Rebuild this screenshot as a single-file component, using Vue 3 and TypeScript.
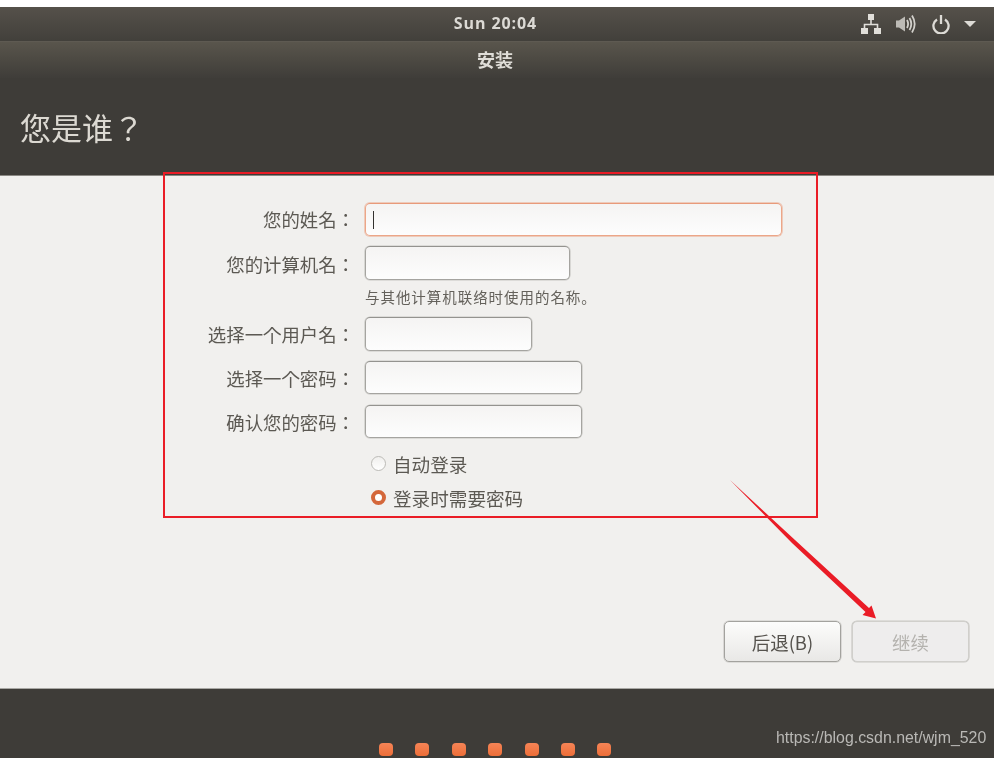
<script setup lang="ts">
const dots: number[] = [1, 2, 3, 4, 5, 6, 7];
</script>

<template>
  <div class="screen">
    <div class="topbar">
      <span class="clock">Sun 20:04</span>
      <div class="tray">
        <svg class="i-net" width="20" height="20" viewBox="0 0 20 20">
          <path d="M7 0h6v6H7zM0 14h7v6H0zM13 14h7v6h-7z" fill="#e0ded9" />
          <path d="M10 6v4M3.5 14v-3.5h13V14" fill="none" stroke="#e0ded9" stroke-width="1.6" />
        </svg>
        <svg class="i-vol" width="20" height="20" viewBox="0 0 20 20">
          <path d="M0 6.5h3L9 2.5v15l-6-4H0z" fill="#bdbbb6" />
          <path d="M11 6q2.2 4 0 8M13.5 4q3.6 6 0 12M16 1.5q5.4 8.5 0 17" fill="none" stroke="#d2d0cb" stroke-width="1.8" />
        </svg>
        <svg class="i-pow" width="18" height="19" viewBox="0 0 18 19">
          <path d="M5 4.4a7.6 7.6 0 1 0 8 0" fill="none" stroke="#dddbd6" stroke-width="2.3" />
          <path d="M9 0v9" fill="none" stroke="#dddbd6" stroke-width="2.3" />
        </svg>
        <svg class="i-caret" width="12" height="6" viewBox="0 0 12 6">
          <path d="M0 0h12L6 6z" fill="#dddbd6" />
        </svg>
      </div>
    </div>

    <div class="titlebar">安装</div>

    <header class="heading">
      <h1>您是谁？</h1>
    </header>

    <main class="content">
      <form class="form" @submit.prevent>
        <label class="label label-first">您的姓名：</label>
        <div class="field field-full focused"><span class="caret"></span></div>

        <label class="label label-host">您的计算机名：</label>
        <div class="field field-host"></div>

        <span></span>
        <p class="hint">与其他计算机联络时使用的名称。</p>

        <label class="label">选择一个用户名：</label>
        <div class="field field-user"></div>

        <label class="label">选择一个密码：</label>
        <div class="field field-pass"></div>

        <label class="label">确认您的密码：</label>
        <div class="field field-pass"></div>

        <span></span>
        <div class="radio-row">
          <span class="radio"></span>
          <span class="radio-text">自动登录</span>
        </div>

        <span></span>
        <div class="radio-row">
          <span class="radio checked"></span>
          <span class="radio-text">登录时需要密码</span>
        </div>
      </form>

      <div class="actions">
        <button type="button" class="btn">后退(B)</button>
        <button type="button" class="btn disabled">继续</button>
      </div>
    </main>

    <footer class="footer">
      <span v-for="d in dots" :key="d" class="dot"></span>
    </footer>

    <div class="red-box"></div>
    <svg class="arrow" width="996" height="758" viewBox="0 0 996 758">
      <path d="M730 480 L795 540 L869 608 L871.5 605.5 L876 618.5 L862.5 615 L865.5 612 L792 543 Z" fill="#ea1c26" />
    </svg>
    <span class="watermark">https://blog.csdn.net/wjm_520</span>
  </div>
</template>

<style>
html,
body {
  margin: 0;
  background: #fff;
}
</style>

<style scoped>
.screen {
  position: relative;
  width: 996px;
  height: 758px;
  box-sizing: border-box;
  padding: 7px 2px 0 0;
  display: flex;
  flex-direction: column;
  overflow: hidden;
  background: #fff;
  font-family: "Noto Sans CJK JP", "Noto Sans", sans-serif;
  filter: blur(0.35px);
}
.topbar {
  position: relative;
  height: 34px;
  flex: none;
  box-sizing: border-box;
  padding: 0 0 3px 0;
  display: flex;
  align-items: center;
  justify-content: center;
  background: linear-gradient(#55514a, #42403b);
}
.clock {
  font-family: "Open Sans", "DejaVu Sans", sans-serif;
  font-weight: 700;
  font-size: 16px;
  letter-spacing: 0.9px;
  color: #dcdad5;
  margin-left: -3px;
}
.tray {
  position: absolute;
  right: 18px;
  top: 7px;
  display: flex;
  align-items: center;
}
.i-net {
  margin-right: 15px;
}
.i-vol {
  margin-right: 16px;
}
.i-pow {
  margin-right: 14px;
}
.titlebar {
  height: 37px;
  flex: none;
  box-sizing: border-box;
  border-top: 1px solid #5e5a52;
  display: flex;
  align-items: center;
  justify-content: center;
  background: linear-gradient(#59554c, #3f3d39);
  font-size: 18px;
  font-weight: 700;
  color: #dfddd8;
  padding: 0 4px 3px 0;
}
.heading {
  height: 98px;
  flex: none;
  box-sizing: border-box;
  background: #3e3c38;
  border-bottom: 1px solid #8a8883;
  padding: 27px 0 0 20px;
}
.heading h1 {
  margin: 0;
  font-size: 31px;
  line-height: 44px;
  font-weight: 400;
  color: #dcd9d2;
}
.content {
  flex: 1;
  display: flex;
  flex-direction: column;
  background: #f1f0ee;
  border-bottom: 1px solid #a9a8a4;
  padding-top: 27px;
  min-height: 0;
}
.form {
  display: grid;
  grid-template-columns: 353px 1fr;
  grid-template-rows: 43px 34px 37px 44px 44px 42px 34px 34px;
  column-gap: 12px;
  align-items: start;
}
.label {
  text-align: right;
  font-size: 18.4px;
  line-height: 34px;
  color: #5c5953;
  white-space: nowrap;
  transform: translateX(2px);
}
.label-first {
  line-height: 32px;
}
.label-host {
  line-height: 36px;
}
.field {
  box-sizing: border-box;
  height: 33px;
  border: 1px solid #a5a4a0;
  border-top-color: #94938f;
  border-radius: 5px;
  background: linear-gradient(#f5f4f3, #fdfdfd);
  box-shadow: 0 0 0 0.6px rgba(165, 164, 160, 0.55);
  display: flex;
  align-items: center;
}
.field-full {
  width: 417px;
}
.field-host {
  width: 205px;
  height: 34px;
}
.field-user {
  width: 167px;
  height: 34px;
}
.field-pass {
  width: 217px;
}
.focused {
  border-color: #eca688;
  border-top-color: #e89a7a;
  box-shadow: 0 0 0 1px rgba(236, 166, 136, 0.5);
}
.caret {
  display: block;
  width: 1px;
  height: 18px;
  margin-left: 7px;
  background: #33312e;
}
.hint {
  margin: 0;
  height: 37px;
  line-height: 34px;
  font-size: 14.5px;
  letter-spacing: 0.95px;
  color: #64615b;
  white-space: nowrap;
}
.radio-row {
  height: 34px;
  display: flex;
  align-items: center;
  padding-left: 6px;
}
.radio {
  box-sizing: border-box;
  width: 15px;
  height: 15px;
  border-radius: 50%;
  border: 1px solid #bcbbb7;
  background: linear-gradient(#f0efed, #fff);
  margin: -2px 7px 0 0;
}
.radio.checked {
  border: 4.5px solid #d4673a;
  background: #fff;
}
.radio-text {
  font-size: 18.6px;
  line-height: 24px;
  color: #5c5953;
}
.actions {
  margin-top: auto;
  padding: 0 25px 26px 0;
  display: flex;
  justify-content: flex-end;
  gap: 11px;
}
.btn {
  box-sizing: border-box;
  width: 117px;
  height: 41px;
  border-radius: 5px;
  border: 1px solid #a3a29e;
  background: linear-gradient(#fcfcfb, #e9e8e6);
  box-shadow: 0 0 0 0.6px rgba(163, 162, 158, 0.5);
  font-family: inherit;
  font-size: 18.4px;
  color: #55524d;
  padding: 0;
}
.btn.disabled {
  border-color: #d0cfcb;
  background: #eeeded;
  color: #b4b2ae;
}
.footer {
  height: 69px;
  flex: none;
  box-sizing: border-box;
  background: #3e3c38;
  display: flex;
  justify-content: flex-start;
  align-items: flex-end;
  gap: 22.4px;
  padding: 0 0 2px 379px;
}
.dot {
  width: 14px;
  height: 13px;
  border-radius: 4px;
  background: linear-gradient(#f58456, #ed6e38);
}
.red-box {
  position: absolute;
  left: 163px;
  top: 172px;
  width: 655px;
  height: 346px;
  box-sizing: border-box;
  border: 2px solid #ea1c26;
}
.arrow {
  position: absolute;
  left: 0;
  top: 0;
  pointer-events: none;
}
.watermark {
  position: absolute;
  left: 776px;
  top: 728px;
  font-family: "Liberation Sans", sans-serif;
  font-size: 15.9px;
  line-height: 20px;
  color: #b9b8b5;
  white-space: nowrap;
}
</style>
